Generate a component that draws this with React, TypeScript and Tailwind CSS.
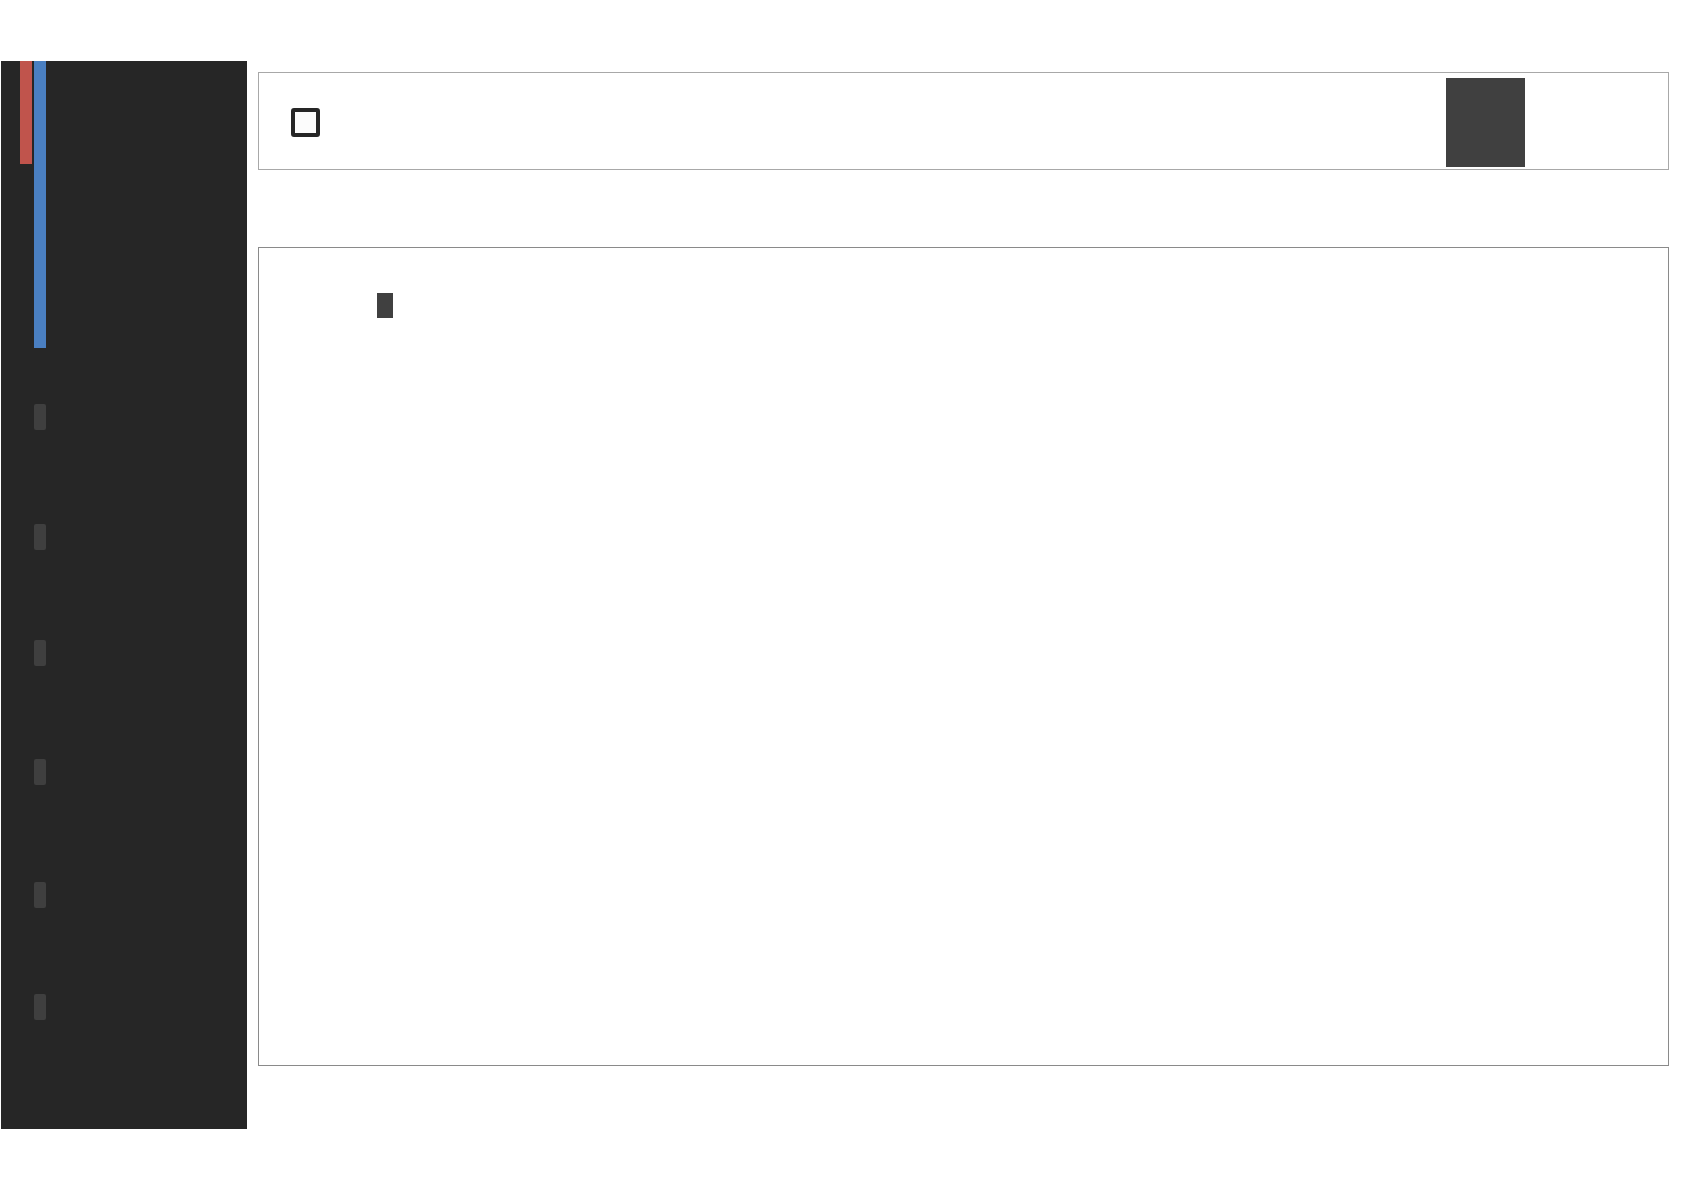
const navStops = [56, 94, 90, 93, 97, 86]

function Sidebar() {
  return (
    <aside className="flex h-[1068px] w-[246px] shrink-0 items-start bg-[#262626]">
      <div className="ml-[19px] h-[103px] w-[12px] bg-[#c0544c]" />
      <div className="ml-[2px] flex w-[12px] flex-col">
        <div className="h-[287px] w-[12px] bg-[#4a7fc1]" />
        {navStops.map((gap, i) => (
          <div key={i} className="h-[26px] w-[12px] rounded-[2px] bg-[#3f3f3f]" style={{ marginTop: gap }} />
        ))}
      </div>
    </aside>
  )
}

function Toolbar() {
  return (
    <div className="flex h-[98px] items-start border border-[#a8a8a8] bg-white">
      <div className="ml-[32px] mt-[35px] h-[29px] w-[29px] rounded-[3px] border-[4px] border-[#262626] bg-[#fcfcfc]" />
      <div className="ml-auto mr-[143px] mt-[5px] h-[89px] w-[79px] bg-[#404040]" />
    </div>
  )
}

function Canvas() {
  return (
    <div className="mt-[77px] h-[819px] border border-[#8a8a8a] bg-white">
      <div className="ml-[118px] mt-[45px] h-[25px] w-[16px] bg-[#404040]" />
    </div>
  )
}

export default function App() {
  return (
    <div className="flex h-[1190px] w-[1684px] items-start bg-white pl-[1px] pt-[61px]">
      <Sidebar />
      <main className="ml-[11px] w-[1411px] pt-[11px]">
        <Toolbar />
        <Canvas />
      </main>
    </div>
  )
}
